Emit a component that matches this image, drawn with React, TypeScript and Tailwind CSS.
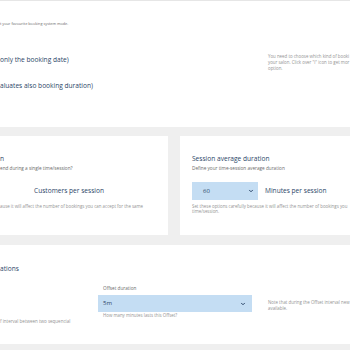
import React from 'react';
import { ChevronDown } from 'lucide-react';

const title = 'text-[6.6px] leading-[8px] font-medium text-[#2b4568] whitespace-nowrap';
const hint = 'text-[4.4px] leading-[5px] text-[#939393] whitespace-nowrap';
const sub = 'text-[4.7px] leading-[6px] text-[#6b6b6b] whitespace-nowrap';

const Select: React.FC<{ value: string; className: string }> = ({ value, className }) => (
  <div className={`flex items-center justify-between bg-[#c4ddf3] text-[#2b4568] ${className}`}>
    <span className="text-[6px] font-medium">{value}</span>
    <ChevronDown size={6} strokeWidth={4} className="text-[#2b4568]" />
  </div>
);

export default function App() {
  return (
    <div
      className="w-[350px] h-[350px] overflow-hidden bg-[#efefef]"
      style={{ fontFamily: '"Open Sans", "Noto Sans", sans-serif' }}
    >
      {/* booking system mode */}
      <div className="h-[127px] bg-white border-t border-[#e6e6e6] flex">
        <div className="w-[268px] pt-[20px]">
          <p className="text-[3.8px] leading-[6px] text-[#6b6b6b] whitespace-nowrap">t your favourite booking system mode.</p>
          <div className={`${title} mt-[29px]`}>only the booking date)</div>
          <div className={`${title} mt-[18px]`}>aluates also booking duration)</div>
        </div>
        <div className="pt-[52px] text-[4.4px] leading-[6px] text-[#939393] whitespace-nowrap">
          <div>You need to choose which kind of booki</div>
          <div>your salon. Click over "i" icon to get mor</div>
          <div>option.</div>
        </div>
      </div>

      {/* sessions */}
      <div className="mt-[9px] h-[99px] flex gap-[12px]">
        <div className="w-[168px] bg-white pt-[19px]">
          <div className={title}>n</div>
          <div className={`${sub} mt-[2px]`}>end during a single time/session?</div>
          <div className="mt-[11px] h-[18px] flex items-center pl-[34px]">
            <span className={title}>Customers per session</span>
          </div>
          <div className={`${hint} mt-[4px]`}>ause it will affect the number of bookings you can accept for the same</div>
        </div>
        <div className="flex-1 bg-white pt-[19px] pl-[12px]">
          <div className={title}>Session average duration</div>
          <div className={`${sub} mt-[2px]`}>Define your time-session average duration</div>
          <div className="mt-[11px] h-[18px] flex items-center gap-[7px]">
            <Select value="60" className="w-[66px] h-[18px] pl-[11px] pr-[4px]" />
            <span className={title}>Minutes per session</span>
          </div>
          <div className={`${hint} mt-[4px]`}>
            <div>Set these options carefully because it will affect the number of bookings you</div>
            <div>time/session.</div>
          </div>
        </div>
      </div>

      {/* offset */}
      <div className="mt-[10px] h-[99px] bg-white pt-[20px]">
        <div className={title}>ations</div>
        <div className="mt-[12px] flex">
          <div className="w-[98px]">
            <div className="mt-[34px] text-[4.5px] leading-[5px] text-[#939393] whitespace-nowrap">f interval between two sequencial</div>
          </div>
          <div className="w-[154px]">
            <div className={`${sub} pl-[5px]`}>Offset duration</div>
            <Select value="5m" className="mt-[4px] h-[17px] pl-[5px] pr-[6px]" />
            <div className={`${hint} pl-[5px] mt-[1px]`}>How many minutes lasts this Offset?</div>
          </div>
          <div className="ml-[16px] mt-[14px] text-[4.4px] leading-[6px] text-[#939393] whitespace-nowrap">
            <div>Note that during the Offset interval new</div>
            <div>available.</div>
          </div>
        </div>
      </div>
    </div>
  );
}
